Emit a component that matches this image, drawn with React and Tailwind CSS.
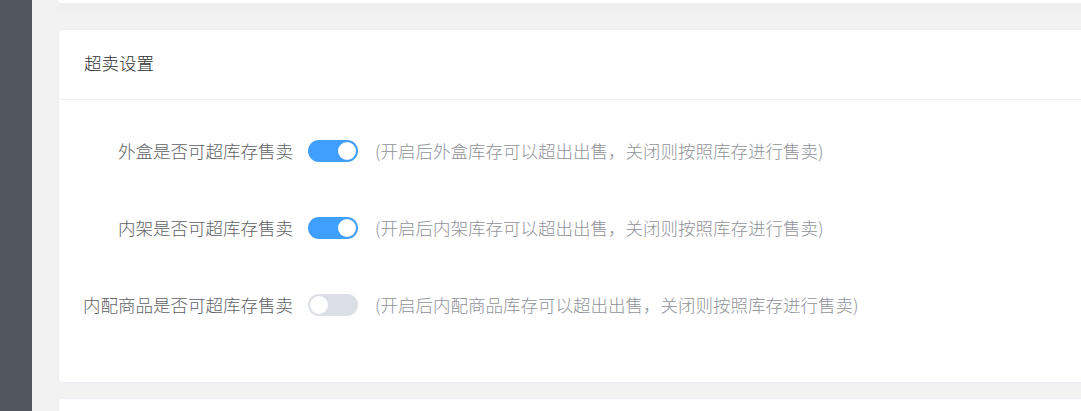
import React, { useState } from 'react';

const rows = [
  { label: '外盒是否可超库存售卖', on: true, hint: '(开启后外盒库存可以超出出售，关闭则按照库存进行售卖)' },
  { label: '内架是否可超库存售卖', on: true, hint: '(开启后内架库存可以超出出售，关闭则按照库存进行售卖)' },
  { label: '内配商品是否可超库存售卖', on: false, hint: '(开启后内配商品库存可以超出出售，关闭则按照库存进行售卖)' },
];

const Switch = ({ on, onClick }) => (
  <button
    onClick={onClick}
    className={`relative w-[50px] h-[22px] rounded-full shrink-0 transition-colors ${on ? 'bg-[#409eff]' : 'bg-[#dcdfe6]'}`}
  >
    <span
      className={`absolute top-[2px] w-[18px] h-[18px] rounded-full bg-white transition-all ${on ? 'left-[30px]' : 'left-[2px]'}`}
    ></span>
  </button>
);

const App = () => {
  const [values, setValues] = useState(rows.map(r => r.on));

  const toggle = idx => setValues(v => v.map((x, i) => (i === idx ? !x : x)));

  return (
    <div
      className="flex h-[411px] w-full overflow-hidden bg-[#f2f2f2] font-light"
      style={{ fontFamily: '"Noto Sans CJK SC", "Noto Sans", sans-serif' }}
    >
      <div className="w-[32px] shrink-0 bg-[#50575f]"></div>
      <div className="flex-1 min-w-0 pl-[26px] -mr-[20px] flex flex-col">
        <div className="h-[3px] shrink-0 bg-white rounded-b shadow-[0_3px_14px_rgba(0,0,0,0.09)]"></div>
        <div className="mt-[26px] h-[354px] shrink-0 bg-white border border-[#ebeef5] rounded">
          <div className="h-[70px] pl-[25px] pb-[2px] flex items-center border-b border-[#ebeef5] text-[17.5px] text-[#303133]">
            超卖设置
          </div>
          <div className="pt-[40px] flex flex-col gap-[55px]">
            {rows.map((row, idx) => (
              <div key={row.label} className="flex items-center h-[22px] text-[17.5px] leading-none whitespace-nowrap">
                <div className="w-[234px] text-right text-[#606266]">{row.label}</div>
                <div className="ml-[15px] flex">
                  <Switch on={values[idx]} onClick={() => toggle(idx)} />
                </div>
                <div className="ml-[17px] text-[#909399]">{row.hint}</div>
              </div>
            ))}
          </div>
        </div>
        <div className="mt-[15px] h-[40px] shrink-0 bg-white border border-[#ebeef5] rounded"></div>
      </div>
    </div>
  );
};

export default App;
